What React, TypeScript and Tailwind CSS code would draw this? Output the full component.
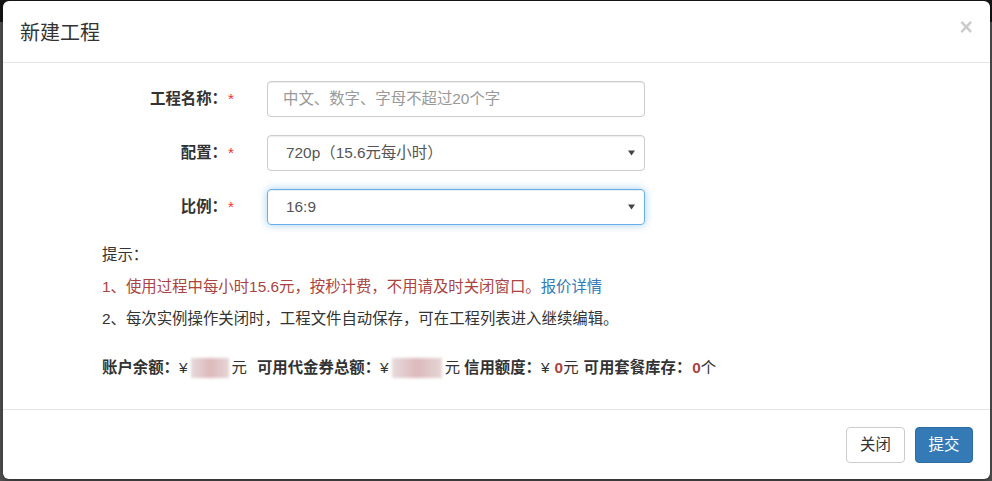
import React from "react";

const FONT = "font-['Liberation_Sans','Noto_Sans_CJK_SC',sans-serif]";

function Required() {
  return <span className="ml-[1px] font-normal text-[#e33]">*</span>;
}

function SelectBox({ value, focused }: { value: string; focused?: boolean }) {
  return (
    <div
      className={`flex h-[36px] w-[378px] items-center justify-between rounded-[4px] border pl-[18px] pr-[8px] text-[#555] ${
        focused
          ? "border-[#66afe9] shadow-[inset_0_1px_1px_rgba(0,0,0,0.075),0_0_8px_rgba(102,175,233,0.6)]"
          : "border-[#ccc] shadow-[inset_0_1px_1px_rgba(0,0,0,0.075)]"
      }`}
    >
      <span>{value}</span>
      <svg width="7" height="6" viewBox="0 0 7 6" className="mr-[1px]">
        <path d="M0 0.5h7L3.5 5.5z" fill="#444" />
      </svg>
    </div>
  );
}

function Blur({ width }: { width: number }) {
  return (
    <span
      className="mx-[3px] inline-block h-[20px] align-[-5px] blur-[1.5px] bg-[linear-gradient(to_right,#e6dadb,#ddb9bb_50%,#e6d4d5)]"
      style={{ width }}
    />
  );
}

export default function App() {
  const rows = [
    { label: "工程名称：", kind: "input" },
    { label: "配置：", kind: "select", value: "720p（15.6元每小时）" },
    { label: "比例：", kind: "select", value: "16:9", focused: true },
  ];

  return (
    <div
      className={`h-[481px] w-[992px] overflow-hidden bg-[linear-gradient(to_bottom,#161616_22px,#565656_22px)] pl-[3px] pr-[2px] pt-[1px] ${FONT} text-[15.4px] text-[#333]`}
    >
      <div className="flex h-[478px] flex-col rounded-[6px] bg-white shadow-[0_3px_9px_rgba(0,0,0,0.5)]">
        {/* header */}
        <div className="flex h-[62px] items-center justify-between border-b border-[#e5e5e5] pl-[17px] pr-[17px]">
          <h4 className="mt-[3px] text-[20px] leading-none text-[#333]">新建工程</h4>
          <span className="-mt-[8px] text-[23px] font-bold leading-none text-black opacity-20">×</span>
        </div>

        {/* body */}
        <div className="flex h-[346px] flex-col pt-[18px]">
          <div className="flex flex-col gap-[18px]">
            {rows.map((r) => (
              <div key={r.label} className="flex items-center gap-[33px]">
                <label className="w-[231px] text-right font-bold">
                  {r.label}
                  <Required />
                </label>
                {r.kind === "input" ? (
                  <div className="flex h-[36px] w-[378px] items-center rounded-[4px] border border-[#ccc] pl-[15px] text-[#999] shadow-[inset_0_1px_1px_rgba(0,0,0,0.075)]">
                    中文、数字、字母不超过20个字
                  </div>
                ) : (
                  <SelectBox value={r.value!} focused={r.focused} />
                )}
              </div>
            ))}
          </div>

          <div className="mt-[14px] pl-[99px] leading-[32px]">
            <p>提示：</p>
            <p className="text-[#a94442]">
              1、使用过程中每小时15.6元，按秒计费，不用请及时关闭窗口。
              <a className="text-[#337ab7]">报价详情</a>
            </p>
            <p>2、每次实例操作关闭时，工程文件自动保存，可在工程列表进入继续编辑。</p>
            <p className="mt-[17px]">
              <b>账户余额：</b>¥<Blur width={38} />元
              <b className="ml-[10px]">可用代金券总额：</b>¥<Blur width={50} />元
              <b className="ml-[4px]">信用额度：</b>¥<b className="ml-[5px] text-[#a94442]">0</b>元
              <b className="ml-[5px]">可用套餐库存：</b>
              <b className="ml-[1px] text-[#a94442]">0</b>个
            </p>
          </div>
        </div>

        {/* footer */}
        <div className="flex flex-1 items-center justify-end gap-[10px] border-t border-[#e5e5e5] pr-[17px]">
          <button className="h-[36px] w-[59px] rounded-[4px] border border-[#ccc] bg-white text-[#333]">
            关闭
          </button>
          <button className="h-[36px] w-[58px] rounded-[4px] border border-[#2e6da4] bg-[#337ab7] text-white">
            提交
          </button>
        </div>
      </div>
    </div>
  );
}
